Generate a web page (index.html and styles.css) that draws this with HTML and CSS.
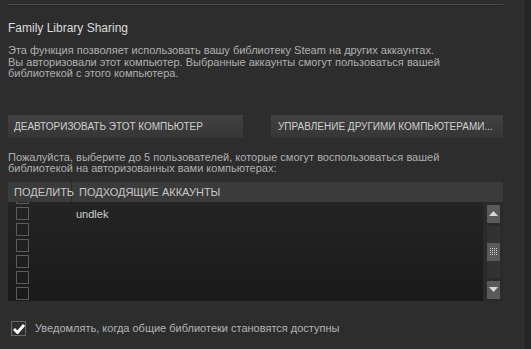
FILE: index.html
```html
<!DOCTYPE html>
<html lang="ru">
  <head>
    <meta charset="UTF-8" />
    <title>Family Library Sharing</title>
    <link rel="stylesheet" href="styles.css">
  </head>
  <body>
    <div class="page">
      <div class="content">
        <div class="rule"></div>
        <h1 class="title">Family Library Sharing</h1>
        <p class="desc">
          Эта функция позволяет использовать вашу библиотеку Steam на других аккаунтах.<br>
          Вы авторизовали этот компьютер. Выбранные аккаунты смогут пользоваться вашей<br>
          библиотекой с этого компьютера.
        </p>

        <div class="buttons">
          <button class="btn btn-left">ДЕАВТОРИЗОВАТЬ ЭТОТ КОМПЬЮТЕР</button>
          <button class="btn btn-right">УПРАВЛЕНИЕ ДРУГИМИ КОМПЬЮТЕРАМИ...</button>
        </div>

        <p class="hint">
          Пожалуйста, выберите до 5 пользователей, которые смогут воспользоваться вашей<br>
          библиотекой на авторизованных вами компьютерах:
        </p>

        <div class="list">
          <div class="list-head">
            <span class="col-share">ПОДЕЛИТЬ</span>
            <span class="col-name">ПОДХОДЯЩИЕ АККАУНТЫ</span>
          </div>
          <div class="list-body">
            <div class="rows">
              <div class="row"><span class="box"></span><span class="name"></span></div>
              <div class="row"><span class="box"></span><span class="name">undlek</span></div>
              <div class="row"><span class="box"></span><span class="name"></span></div>
              <div class="row"><span class="box"></span><span class="name"></span></div>
              <div class="row"><span class="box"></span><span class="name"></span></div>
              <div class="row"><span class="box"></span><span class="name"></span></div>
              <div class="row"><span class="box"></span><span class="name"></span></div>
            </div>
            <div class="scrollbar">
              <div class="sb-btn sb-up">
                <svg width="9" height="5" viewBox="0 0 9 5"><path d="M0 5 L4.5 0 L9 5 Z" fill="#d8d8d8"/></svg>
              </div>
              <div class="sb-track">
                <div class="sb-thumb">
                  <svg width="7" height="7" viewBox="0 0 7 7" fill="#cfcfcf">
                    <rect x="0" y="0" width="1" height="1"/><rect x="2" y="0" width="1" height="1"/><rect x="4" y="0" width="1" height="1"/><rect x="6" y="0" width="1" height="1"/>
                    <rect x="0" y="2" width="1" height="1"/><rect x="2" y="2" width="1" height="1"/><rect x="4" y="2" width="1" height="1"/><rect x="6" y="2" width="1" height="1"/>
                    <rect x="0" y="4" width="1" height="1"/><rect x="2" y="4" width="1" height="1"/><rect x="4" y="4" width="1" height="1"/><rect x="6" y="4" width="1" height="1"/>
                    <rect x="0" y="6" width="1" height="1"/><rect x="2" y="6" width="1" height="1"/><rect x="4" y="6" width="1" height="1"/><rect x="6" y="6" width="1" height="1"/>
                  </svg>
                </div>
              </div>
              <div class="sb-btn sb-down">
                <svg width="9" height="5" viewBox="0 0 9 5"><path d="M0 0 L9 0 L4.5 5 Z" fill="#d8d8d8"/></svg>
              </div>
            </div>
          </div>
        </div>

        <label class="notify">
          <span class="check">
            <svg width="12" height="11" viewBox="0 0 12 11"><path d="M1 6 L4.5 9.5 L11 2" stroke="#ffffff" stroke-width="2.8" fill="none"/></svg>
          </span>
          Уведомлять, когда общие библиотеки становятся доступны
        </label>
      </div>
      <div class="edge"></div>
    </div>
  </body>
</html>
```

FILE: styles.css
```css
/* Base */
* {
  box-sizing: border-box;
  margin: 0;
  padding: 0;
}

body {
  background-color: #2d2d2d;
  font-family: "Liberation Sans", Arial, sans-serif;
  color: #b4b4b4;
  width: 531px;
  height: 349px;
  overflow: hidden;
}

.page {
  display: flex;
  height: 349px;
}

.content {
  width: 523px;
  padding: 4px 20px 0 8px;
}

.edge {
  width: 8px;
  background-color: #262626;
  border-left: 1px solid #333;
}

.rule {
  height: 2px;
  border-top: 1px solid #4a4a4a;
  border-bottom: 1px solid #262626;
}

/* Title and texts */
.title {
  font-size: 12px;
  font-weight: normal;
  color: #dcdcdc;
  margin-top: 15px;
  line-height: 14px;
}

.desc,
.hint {
  font-size: 11px;
  line-height: 11.5px;
  color: #b0b0b0;
}

.desc {
  margin-top: 10px;
}

.hint {
  margin-top: 14px;
}

/* Buttons */
.buttons {
  display: flex;
  justify-content: space-between;
  margin-top: 35px;
}

.btn {
  height: 23px;
  border: none;
  font-family: "Liberation Sans", Arial, sans-serif;
  font-size: 10px;
  color: #d0d0d0;
  text-align: left;
  white-space: nowrap;
  padding: 0 6px;
  background: linear-gradient(#414141, #363636);
}

.btn-left {
  width: 235px;
}

.btn-right {
  width: 232px;
  padding-left: 7px;
}

/* Accounts list */
.list {
  margin-top: 7px;
}

.list-head {
  display: flex;
  height: 20px;
  background-color: #3b3b3b;
  font-size: 11px;
  color: #c8c8c8;
  line-height: 20px;
}

.col-share {
  width: 64px;
  padding-left: 6px;
  white-space: nowrap;
  border-right: 1px solid #2a2a2a;
}

.col-name {
  padding-left: 7px;
}

.list-body {
  display: flex;
  height: 99px;
  background: linear-gradient(#242424, #1a1a1a);
  overflow: hidden;
}

.rows {
  flex: 1;
  margin-top: -12px;
}

.row {
  display: flex;
  align-items: center;
  height: 16px;
}

.box {
  width: 13px;
  height: 13px;
  margin-left: 8px;
  border: 1px solid #5c5c5c;
}

.name {
  margin-left: 47px;
  font-size: 11px;
  color: #d0d0d0;
}

.scrollbar {
  width: 20px;
  background-color: #2a2a2a;
  display: flex;
  flex-direction: column;
  align-items: center;
  padding: 3px 0 2px 1px;
}

.sb-btn {
  width: 13px;
  height: 18px;
  background-color: #5a5a5a;
  display: flex;
  align-items: center;
  justify-content: center;
}

.sb-track {
  flex: 1;
  width: 13px;
  margin: 3px 0;
  background-color: #323232;
  display: flex;
  align-items: center;
}

.sb-thumb {
  width: 13px;
  height: 18px;
  background-color: #5a5a5a;
  display: flex;
  align-items: center;
  justify-content: center;
}

/* Notify checkbox */
.notify {
  display: flex;
  align-items: center;
  gap: 9px;
  margin-top: 20px;
  margin-left: 3px;
  font-size: 11px;
  color: #b4b4b4;
}

.check {
  width: 15px;
  height: 15px;
  border: 1px solid #6a6a6a;
  display: flex;
  align-items: center;
  justify-content: center;
}
```
